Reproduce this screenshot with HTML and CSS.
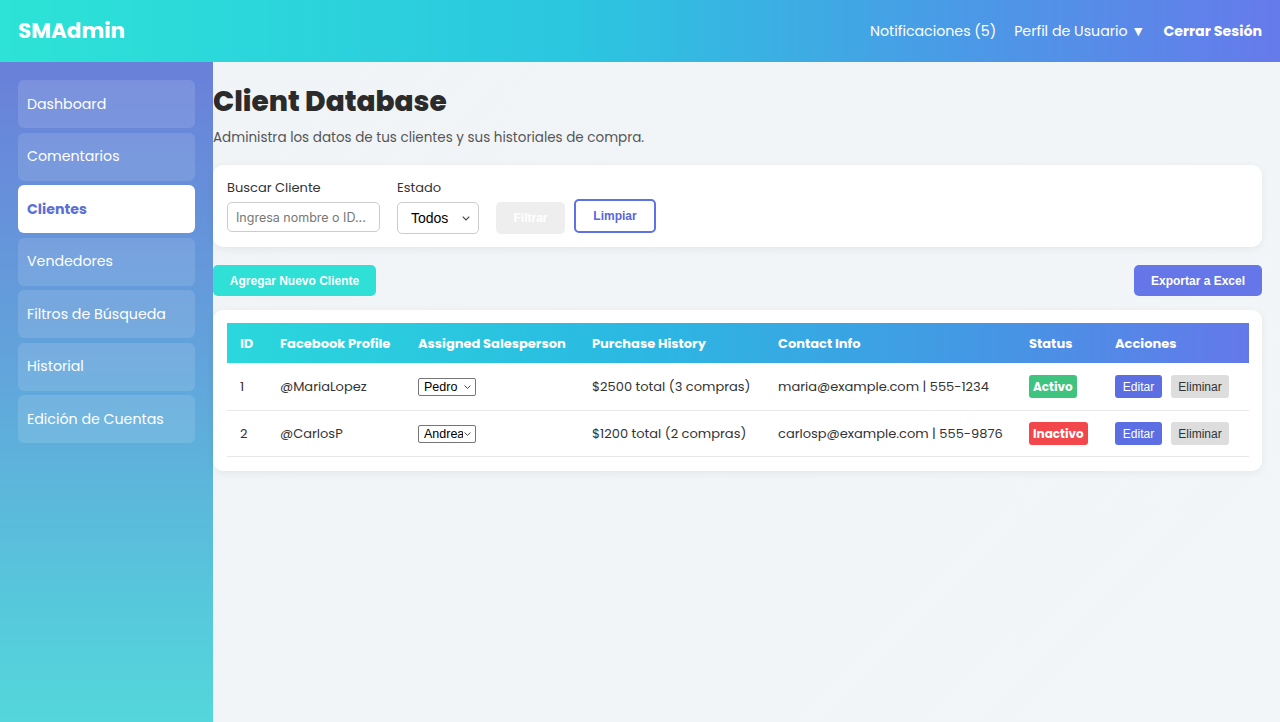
FILE: index.html
```html
<!DOCTYPE html>
<html lang="es">
<head>
<meta charset="utf-8">
<title>SMAdmin - Client Database</title>
<link rel="stylesheet" href="styles.css">
</head>
<body>
<header class="topbar">
  <div class="logo">SMAdmin</div>
  <nav class="topnav">
    <a class="topnav-link">Notificaciones (5)</a>
    <a class="topnav-link">Perfil de Usuario ▼</a>
    <a class="topnav-link strong">Cerrar Sesión</a>
  </nav>
</header>
<div class="layout">
  <aside class="sidebar">
    <a class="side-item">Dashboard</a>
    <a class="side-item">Comentarios</a>
    <a class="side-item active">Clientes</a>
    <a class="side-item">Vendedores</a>
    <a class="side-item">Filtros de Búsqueda</a>
    <a class="side-item">Historial</a>
    <a class="side-item">Edición de Cuentas</a>
  </aside>
  <main class="main">
    <h1 class="page-title">Client Database</h1>
    <p class="page-sub">Administra los datos de tus clientes y sus historiales de compra.</p>

    <section class="card filters">
      <div class="field">
        <label class="field-label">Buscar Cliente</label>
        <input class="text-input" type="text" placeholder="Ingresa nombre o ID...">
      </div>
      <div class="field">
        <label class="field-label">Estado</label>
        <span class="select-wrap">
          <select class="state-select"><option>Todos</option></select>
          <svg class="chev chev-state" viewBox="0 0 8 5" width="8" height="5"><path d="M0.7 0.7 L4 4 L7.3 0.7" fill="none" stroke="#444" stroke-width="1.1"/></svg>
        </span>
      </div>
      <div class="filter-buttons">
        <button class="btn-filter" disabled>Filtrar</button>
        <button class="btn-clear">Limpiar</button>
      </div>
    </section>

    <div class="actions">
      <button class="btn btn-add">Agregar Nuevo Cliente</button>
      <button class="btn btn-export">Exportar a Excel</button>
    </div>

    <section class="card table-card">
      <table class="clients">
        <thead>
          <tr>
            <th class="c-id">ID</th>
            <th class="c-fb">Facebook Profile</th>
            <th class="c-sp">Assigned Salesperson</th>
            <th class="c-ph">Purchase History</th>
            <th class="c-ci">Contact Info</th>
            <th class="c-st">Status</th>
            <th class="c-ac">Acciones</th>
          </tr>
        </thead>
        <tbody>
          <tr>
            <td>1</td>
            <td>@MariaLopez</td>
            <td><span class="select-wrap">
              <select class="sp-select"><option>Pedro</option><option>Andrea</option></select>
              <svg class="chev chev-sp" viewBox="0 0 7 4" width="7" height="4"><path d="M0.6 0.6 L3.5 3.4 L6.4 0.6" fill="none" stroke="#444" stroke-width="1"/></svg>
            </span></td>
            <td>$2500 total (3 compras)</td>
            <td>maria@example.com | 555-1234</td>
            <td><span class="badge ok">Activo</span></td>
            <td><button class="mini edit">Editar</button><button class="mini del">Eliminar</button></td>
          </tr>
          <tr>
            <td>2</td>
            <td>@CarlosP</td>
            <td><span class="select-wrap">
              <select class="sp-select"><option>Andrea</option><option>Pedro</option></select>
              <svg class="chev chev-sp" viewBox="0 0 7 4" width="7" height="4"><path d="M0.6 0.6 L3.5 3.4 L6.4 0.6" fill="none" stroke="#444" stroke-width="1"/></svg>
            </span></td>
            <td>$1200 total (2 compras)</td>
            <td>carlosp@example.com | 555-9876</td>
            <td><span class="badge bad">Inactivo</span></td>
            <td><button class="mini edit">Editar</button><button class="mini del">Eliminar</button></td>
          </tr>
        </tbody>
      </table>
    </section>
  </main>
</div>
</body>
</html>
```
FILE: styles.css
```css
* { box-sizing: border-box; }
html, body { margin: 0; padding: 0; height: 100%; }
body {
  font-family: "Poppins", "Open Sans", "Noto Sans", sans-serif;
  color: #333;
  background: #f1f5f8;
  overflow: hidden;
}
.topbar {
  height: 62px;
  display: flex;
  align-items: center;
  justify-content: space-between;
  padding: 0 18px;
  background: linear-gradient(90deg, #2ce3d6 0%, #2bc6e0 45%, #4a9ae6 75%, #667aea 100%);
  color: #fff;
}
.logo { font-size: 21.5px; font-weight: 700; line-height: 28px; margin-top: -1px; }
.topnav { display: flex; gap: 18px; align-items: center; margin-top: 1px; }
.topnav-link { font-size: 14.2px; color: #fff; }
.topnav-link.strong { font-weight: 700; }

.layout { display: flex; height: calc(100% - 62px); }
.sidebar {
  width: 213px;
  flex: none;
  padding: 18px 18px;
  display: flex;
  flex-direction: column;
  gap: 4.5px;
  background: linear-gradient(180deg, #6a80d9 0%, #62a3db 45%, #56cbdb 85%, #54d6dc 100%);
}
.side-item {
  display: flex;
  align-items: center;
  height: 48px;
  padding: 0 9px;
  border-radius: 6px;
  background: rgba(255, 255, 255, 0.12);
  color: #fff;
  font-size: 14.2px;
}
.side-item.active { background: #fff; color: #5b6fd6; font-weight: 700; }

.main { flex: 1; padding: 23px 18px 20px 0; background: linear-gradient(135deg, #f0f4f7, #f3f6f9); }
.page-title { margin: 0; font-size: 28px; line-height: 34px; font-weight: 800; color: #2b2b2b; }
.page-sub { margin: 9px 0 0; font-size: 13.5px; line-height: 20px; color: #555; }

.card {
  background: #fff;
  border-radius: 10px;
  box-shadow: 0 2px 8px rgba(0, 0, 0, 0.06);
}
.filters {
  margin-top: 17px;
  display: flex;
  align-items: flex-start;
  gap: 17px;
  padding: 13px 14px 13px;
}
.field { display: flex; flex-direction: column; }
.field-label { font-size: 13px; line-height: 18px; padding-top: 1px; margin-bottom: 5px; color: #333; }
.text-input {
  width: 153px; height: 30px;
  border: 1px solid #ccc; border-radius: 5px;
  padding: 0 8px;
  font-family: "Inter", "Liberation Sans", sans-serif; font-size: 12.5px; color: #333;
}
.text-input::placeholder { color: #777; }
.select-wrap { position: relative; display: inline-block; }
.chev { position: absolute; pointer-events: none; }
.chev-state { right: 9px; top: 14px; }
.chev-sp { right: 5px; top: 7px; }
.state-select {
  -webkit-appearance: none; appearance: none;
  width: 82px; height: 32px; display: block;
  border: 1px solid #ccc; border-radius: 5px; background: #fff;
  padding: 0 20px 0 13px;
  font-family: "Liberation Sans", sans-serif; font-size: 14px; color: #000;
}
.filter-buttons { display: flex; align-items: flex-start; gap: 9px; }
.btn-filter {
  margin-top: 24px;
  width: 69px; height: 32px;
  border: none; border-radius: 5px;
  background: #eee; color: #fff;
  font-family: "Liberation Sans", sans-serif; font-size: 12px; font-weight: 700;
}
.btn-clear {
  margin-top: 21px;
  width: 82px; height: 34px;
  border: 2px solid #5e72e4; border-radius: 5px;
  background: #fff; color: #5a67d8;
  font-family: "Liberation Sans", sans-serif; font-size: 12px; font-weight: 700;
}

.actions { margin-top: 18px; display: flex; justify-content: space-between; }
.btn {
  height: 31px; padding: 0;
  border: none; border-radius: 5px; color: #fff; white-space: nowrap;
  font-family: "Liberation Sans", sans-serif; font-size: 12px; font-weight: 700;
}
.btn-add { width: 163px; background: #2ee0d6; }
.btn-export { width: 128px; background: #6476e8; }

.table-card { margin-top: 14px; padding: 13px 13px 14px 14px; }
.clients { width: 100%; border-collapse: collapse; table-layout: fixed; }
.clients thead tr { background: linear-gradient(90deg, #2ad8dc 0%, #2bb8e2 40%, #4596e4 75%, #6478ea 100%); }
.clients th {
  height: 40px; padding: 1px 13px 0;
  text-align: left; color: #fff; font-size: 13px; font-weight: 700; white-space: nowrap;
}
.clients td {
  height: 47px; padding: 1px 13px 0;
  font-size: 13px; color: #333; white-space: nowrap;
  border-bottom: 1px solid #e8e8e8;
}
.clients tbody tr:last-child td { height: 46px; }
.c-id { width: 40px; }
.c-fb { width: 138px; }
.c-sp { width: 174px; }
.c-ph { width: 186px; }
.c-ci { width: 251px; }
.c-st { width: 86px; }
.c-ac { width: 147px; }
.sp-select {
  -webkit-appearance: none; appearance: none; display: block;
  font-family: "Liberation Sans", sans-serif; font-size: 12.5px; color: #000;
  height: 18px; width: 58px; padding: 0 12px 0 5px;
  border: 1px solid #767676; border-radius: 2px; background: #fff;
}
.badge {
  display: inline-block; padding: 0 4px; height: 23px; line-height: 23px;
  border-radius: 3px; color: #fff; font-size: 12px; font-weight: 700;
}
.badge.ok { background: #3ec47e; }
.badge.bad { background: #f2474b; }
.mini {
  height: 23px; border: none; border-radius: 3px;
  font-family: "Liberation Sans", sans-serif; font-size: 12px;
  padding: 0; margin-right: 9px; vertical-align: middle;
}
.mini.edit { background: #5b6fe3; color: #fff; width: 47px; }
.mini.del { background: #ddd; color: #333; width: 58px; }
```
